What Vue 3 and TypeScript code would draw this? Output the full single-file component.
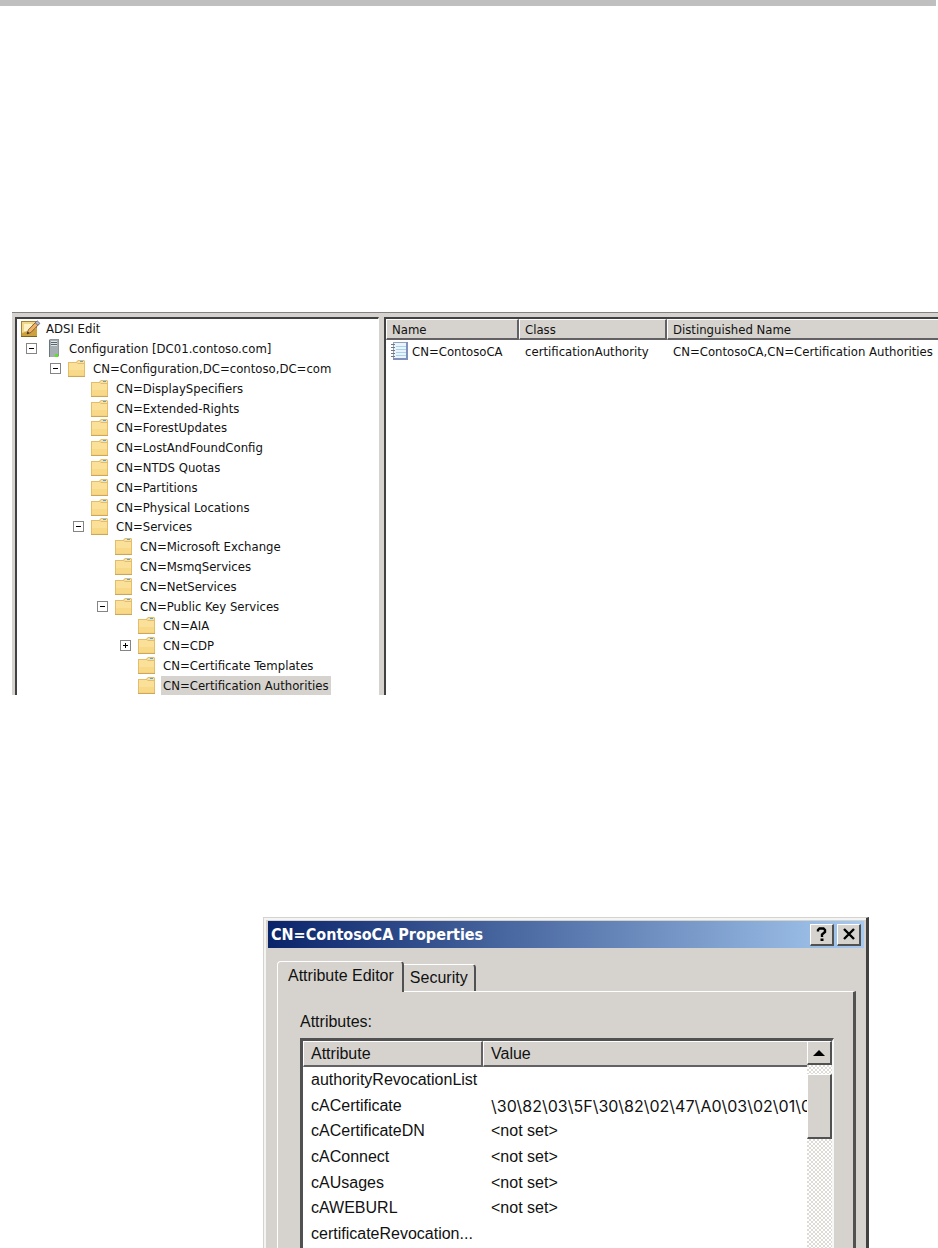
<script setup lang="ts">
interface TreeNode {
  label: string
  depth: number
  icon: 'console' | 'server' | 'folder'
  toggle?: 'open' | 'closed'
  selected?: boolean
}

interface Attribute {
  name: string
  value: string
  binary?: boolean
}

const nodes: TreeNode[] = [
  { label: 'ADSI Edit', depth: 0, icon: 'console' },
  { label: 'Configuration [DC01.contoso.com]', depth: 1, icon: 'server', toggle: 'open' },
  { label: 'CN=Configuration,DC=contoso,DC=com', depth: 2, icon: 'folder', toggle: 'open' },
  { label: 'CN=DisplaySpecifiers', depth: 3, icon: 'folder' },
  { label: 'CN=Extended-Rights', depth: 3, icon: 'folder' },
  { label: 'CN=ForestUpdates', depth: 3, icon: 'folder' },
  { label: 'CN=LostAndFoundConfig', depth: 3, icon: 'folder' },
  { label: 'CN=NTDS Quotas', depth: 3, icon: 'folder' },
  { label: 'CN=Partitions', depth: 3, icon: 'folder' },
  { label: 'CN=Physical Locations', depth: 3, icon: 'folder' },
  { label: 'CN=Services', depth: 3, icon: 'folder', toggle: 'open' },
  { label: 'CN=Microsoft Exchange', depth: 4, icon: 'folder' },
  { label: 'CN=MsmqServices', depth: 4, icon: 'folder' },
  { label: 'CN=NetServices', depth: 4, icon: 'folder' },
  { label: 'CN=Public Key Services', depth: 4, icon: 'folder', toggle: 'open' },
  { label: 'CN=AIA', depth: 5, icon: 'folder' },
  { label: 'CN=CDP', depth: 5, icon: 'folder', toggle: 'closed' },
  { label: 'CN=Certificate Templates', depth: 5, icon: 'folder' },
  { label: 'CN=Certification Authorities', depth: 5, icon: 'folder', selected: true },
]

const attributes: Attribute[] = [
  { name: 'authorityRevocationList', value: '' },
  { name: 'cACertificate', value: '\\30\\82\\03\\5F\\30\\82\\02\\47\\A0\\03\\02\\01\\0', binary: true },
  { name: 'cACertificateDN', value: '<not set>' },
  { name: 'cAConnect', value: '<not set>' },
  { name: 'cAUsages', value: '<not set>' },
  { name: 'cAWEBURL', value: '<not set>' },
  { name: 'certificateRevocation...', value: '' },
]
</script>

<template>
  <main class="page">
    <div class="rule"></div>

    <section class="console">
      <ul class="tree">
        <li v-for="node in nodes" :key="node.label" class="node" :class="'depth-' + node.depth">
          <button
            v-if="node.toggle"
            class="toggle"
            type="button"
            :aria-label="'Toggle ' + node.label"
            :aria-expanded="node.toggle === 'open'"
          >
            <svg viewBox="0 0 11 11" width="11" height="11">
              <rect x=".5" y=".5" width="10" height="10" fill="#fff" stroke="#858585" />
              <path d="M3 5.500h5" stroke="#000" />
              <path v-if="node.toggle === 'closed'" d="M5.500 3v5" stroke="#000" />
            </svg>
          </button>
          <span v-else-if="node.depth > 0" class="toggle"></span>

          <svg v-if="node.icon === 'console'" class="icon-console" viewBox="0 0 20 18" width="20" height="18">
            <rect x=".5" y="1.500" width="15" height="15" fill="#f0d888" stroke="#a58435" />
            <path d="M1 13l15-5v8H1z" fill="#cda23c" />
            <path d="M3 4h8v7H3z" fill="#fff3c6" />
            <path d="M0 16.500h16" stroke="#7d6122" />
            <path d="M6 14l1.400-4.200L15 2l2.700 2.500-7.800 8z" fill="#f2b263" stroke="#68482b" stroke-width=".8" />
            <path d="M14.200 2.800l1.900-2 2.800 2.500-1.900 2z" fill="#b9bdcc" stroke="#5c5f74" stroke-width=".8" />
            <path d="M6 14l.8-2.300 1.500 1.400z" fill="#222" />
          </svg>
          <svg v-else-if="node.icon === 'server'" viewBox="0 0 17 19" width="17" height="19">
            <path d="M5 1l1-1h9v17l-1 1H5z" fill="#8d989d" />
            <path d="M6 1h8v17H6z" fill="#a5afb3" />
            <path d="M5 1h1v17H5z" fill="#6d777b" />
            <path d="M7 2h6v5H7z" fill="#dfe5e7" />
            <path d="M7 3.500h6M7 5.500h6" stroke="#59656a" />
            <rect x="11" y="15" width="3" height="3" fill="#5ee024" />
          </svg>
          <svg v-else viewBox="0 0 17 17" width="17" height="17">
            <path d="M0 2h8l1-1 1-1h6l1 1v15H0z" fill="#e3bd68" />
            <path d="M10 1h6v2H9z" fill="#f3e2ae" />
            <rect x="12" y="1" width="3" height="1" fill="#5aa2dc" />
            <path d="M1 3h8l1 1h6v11.500H1z" fill="#fbe09a" />
            <path d="M1 10h15v5.500H1z" fill="#f8d988" />
            <path d="M0 16.500h17" stroke="#cfa656" />
          </svg>
          <span class="label" :class="{ selected: node.selected }">{{ node.label }}</span>
        </li>
      </ul>

      <div class="results">
        <table class="grid">
          <colgroup>
            <col class="col-name" />
            <col class="col-class" />
            <col />
          </colgroup>
          <thead>
            <tr>
              <th>Name</th>
              <th>Class</th>
              <th>Distinguished Name</th>
            </tr>
          </thead>
          <tbody>
            <tr>
              <td class="entry">
                <div class="entry-name">
                  <svg viewBox="0 0 18 18" width="18" height="18">
                    <rect x="2" y="0" width="15" height="18" fill="#e9f4fd" />
                    <path d="M2 .5h15M2.500 0v18" stroke="#93a3bf" />
                    <path d="M5 4.500h10M5 7.500h10M5 10.500h10M5 13.500h10" stroke="#a9d2ee" />
                    <path d="M16 0v18M2 17h15" stroke="#7f90bd" stroke-width="2" />
                    <path d="M0 2.500h4M0 5.500h4M0 8.500h4M0 11.500h4M0 14.500h4" stroke="#77787c" />
                  </svg>
                  <span>CN=ContosoCA</span>
                </div>
              </td>
              <td>certificationAuthority</td>
              <td>CN=ContosoCA,CN=Certification Authorities</td>
            </tr>
          </tbody>
        </table>
      </div>
    </section>

    <section class="dialog" role="dialog" aria-labelledby="dialog-title">
      <header class="title-bar">
        <h1 id="dialog-title">CN=ContosoCA Properties</h1>
        <button type="button" class="caption" aria-label="Help">
          <svg viewBox="0 0 12 14" width="12" height="14">
            <path d="M2 4.500V3l1.500-1.500h4L9 3v2L6 7.500V10" fill="none" stroke="#000" stroke-width="2.400" />
            <rect x="4.500" y="11.500" width="3" height="2.500" />
          </svg>
        </button>
        <button type="button" class="caption" aria-label="Close">
          <svg viewBox="0 0 12 12" width="12" height="12">
            <path d="M1 1l10 10M11 1L1 11" stroke="#000" stroke-width="2.400" />
          </svg>
        </button>
      </header>

      <div class="tabs" role="tablist">
        <button type="button" role="tab" class="tab active" aria-selected="true">Attribute Editor</button>
        <button type="button" role="tab" class="tab" aria-selected="false">Security</button>
      </div>

      <div class="panel" role="tabpanel">
        <p id="attributes-label" class="caption-text">Attributes:</p>
        <div class="list">
          <div class="list-view">
            <table class="attributes" aria-labelledby="attributes-label">
              <colgroup>
                <col class="col-attribute" />
                <col />
              </colgroup>
              <thead>
                <tr>
                  <th>Attribute</th>
                  <th>Value</th>
                </tr>
              </thead>
              <tbody>
                <tr v-for="item in attributes" :key="item.name">
                  <td>{{ item.name }}</td>
                  <td :class="{ binary: item.binary }">{{ item.value }}</td>
                </tr>
              </tbody>
            </table>
          </div>
          <div class="scrollbar">
            <button type="button" class="scroll-up" aria-label="Scroll up">
              <svg viewBox="0 0 12 6" width="12" height="6"><path d="M6 0l6 6H0z" /></svg>
            </button>
            <div class="thumb"></div>
          </div>
        </div>
      </div>
    </section>
  </main>
</template>

<style>
body {
  margin: 0;
  background: #fff;
}
</style>

<style scoped>
.page {
  display: flex;
  flex-direction: column;
  height: 100vh;
  overflow: hidden;
  color: #111;
  font-family: 'DejaVu Sans Condensed', 'DejaVu Sans', sans-serif;
  font-size: 13px;
}

button {
  font: inherit;
  color: inherit;
}

svg {
  display: block;
  flex: none;
}

.rule {
  flex: none;
  height: 6px;
  margin-right: 2px;
  background: #bfbfbf;
}

/* console */
.console {
  display: flex;
  flex: none;
  gap: 5px;
  box-sizing: border-box;
  height: 383px;
  margin: 306px 0 0 12px;
  padding: 4px 0 0 3px;
  overflow: hidden;
  background: #d6d3ce;
  border-top: 1px solid #848284;
}

.tree {
  display: flex;
  flex-direction: column;
  flex: none;
  box-sizing: border-box;
  width: 364px;
  height: 378px;
  margin: 0;
  padding: 0;
  list-style: none;
  background: #fff;
  border: solid #424142;
  border-width: 2px 0 0 2px;
  border-right: 1px solid #fff;
}

.node {
  display: flex;
  flex: 1;
  align-items: center;
  min-height: 0;
  white-space: nowrap;
}

.depth-0 { padding-left: 4px; }
.depth-1 { padding-left: 9px; }
.depth-2 { padding-left: 33px; }
.depth-3 { padding-left: 56px; }
.depth-4 { padding-left: 80px; }
.depth-5 { padding-left: 103px; }

.toggle {
  flex: none;
  width: 11px;
  height: 11px;
  margin: 0 7px 0 0;
  padding: 0;
  background: none;
  border: 0;
}

.label {
  margin-left: 6px;
  padding: 0 2px;
  line-height: 19px;
}

.icon-console + .label {
  margin-left: 3px;
}

.selected {
  background: #d6d3ce;
}

.results {
  flex: 1;
  min-width: 0;
  overflow: hidden;
  background: #fff;
  border: solid #424142;
  border-width: 2px 0 0 2px;
}

table {
  width: 100%;
  table-layout: fixed;
  border-collapse: separate;
  border-spacing: 0;
}

th,
td {
  overflow: hidden;
  font-weight: normal;
  text-align: left;
  white-space: nowrap;
}

th {
  background: #d6d3ce;
  border: solid #fff;
  border-width: 1px 2px 2px 1px;
  border-right-color: #636163;
  border-bottom-color: #636163;
}

th:last-child {
  border-right: 0;
}

.col-name { width: 133px; }
.col-class { width: 148px; }

.grid th {
  height: 18px;
  padding: 0 0 0 5px;
}

.grid td {
  height: 22px;
  padding: 0 0 0 6px;
}

.grid .entry {
  padding-left: 5px;
}

.entry-name {
  display: flex;
  gap: 3px;
  align-items: center;
}

/* properties dialog */
.dialog {
  display: flex;
  flex: 1;
  flex-direction: column;
  min-height: 0;
  margin: 222px 69px 0 263px;
  padding: 3px 2px 0 4px;
  overflow: hidden;
  background: #d6d3ce;
  border: solid #d6d3ce;
  border-width: 1px 3px 0 1px;
  border-right-color: #424142;
  box-shadow: inset 2px 2px #f4f4f2;
  font-family: 'Liberation Sans', Arial, sans-serif;
  font-size: 16px;
}

.title-bar {
  display: flex;
  flex: none;
  gap: 3px;
  align-items: center;
  height: 27px;
  padding: 0 3px;
  background: linear-gradient(90deg, #0a246a, #a6caf0);
}

.title-bar h1 {
  flex: 1;
  margin: 0;
  color: #fff;
  font-family: 'DejaVu Sans Condensed', 'DejaVu Sans', sans-serif;
  font-size: 16px;
  line-height: 27px;
}

.caption,
.scroll-up,
.thumb {
  display: flex;
  align-items: center;
  justify-content: center;
  box-sizing: border-box;
  padding: 0;
  background: #d6d3ce;
  border: solid #fff;
  border-width: 1px 2px 2px 1px;
  border-right-color: #525152;
  border-bottom-color: #525152;
}

.caption {
  width: 24px;
  height: 22px;
}

.tabs {
  display: flex;
  flex: none;
  align-items: flex-end;
  height: 31px;
  margin: 12px 0 0 9px;
}

.tab {
  box-sizing: border-box;
  height: 27px;
  padding: 0 6px;
  background: #d6d3ce;
  border: solid #fff;
  border-width: 1px 2px 0 0;
  border-right-color: #525152;
  border-radius: 0 4px 0 0;
  white-space: nowrap;
}

.tab.active {
  z-index: 1;
  height: 31px;
  margin-bottom: -1px;
  padding: 0 8px 2px 10px;
  border-left-width: 1px;
  border-radius: 4px 4px 0 0;
}

.panel {
  flex: 1;
  min-height: 0;
  margin: 0 8px 0 9px;
  padding: 20px 19px 0 22px;
  border: solid #fff;
  border-width: 1px 3px 0 1px;
  border-right-color: #525152;
}

.caption-text {
  margin: 0;
  line-height: 20px;
}

.list {
  display: flex;
  height: 220px;
  margin-top: 6px;
  background: #fff;
  border: solid #525152;
  border-width: 3px 2px 0 3px;
  border-right-color: #f7f7f7;
}

.list-view {
  flex: 1;
  min-width: 0;
}

.attributes {
  height: 206px;
}

.col-attribute { width: 180px; }

.attributes th {
  box-sizing: border-box;
  height: 26px;
  padding: 0 0 0 7px;
}

.attributes td {
  padding: 0 0 0 8px;
  line-height: 20px;
}

.attributes .binary {
  font-family: Inter, 'Liberation Sans', sans-serif;
}

.scrollbar {
  flex: none;
  width: 25px;
  background: repeating-conic-gradient(#fff 0 25%, #dedbd6 0 50%) 0 0 / 4px 4px;
}

.scroll-up {
  width: 25px;
  height: 24px;
}

.thumb {
  height: 65px;
  margin-top: 9px;
}
</style>
